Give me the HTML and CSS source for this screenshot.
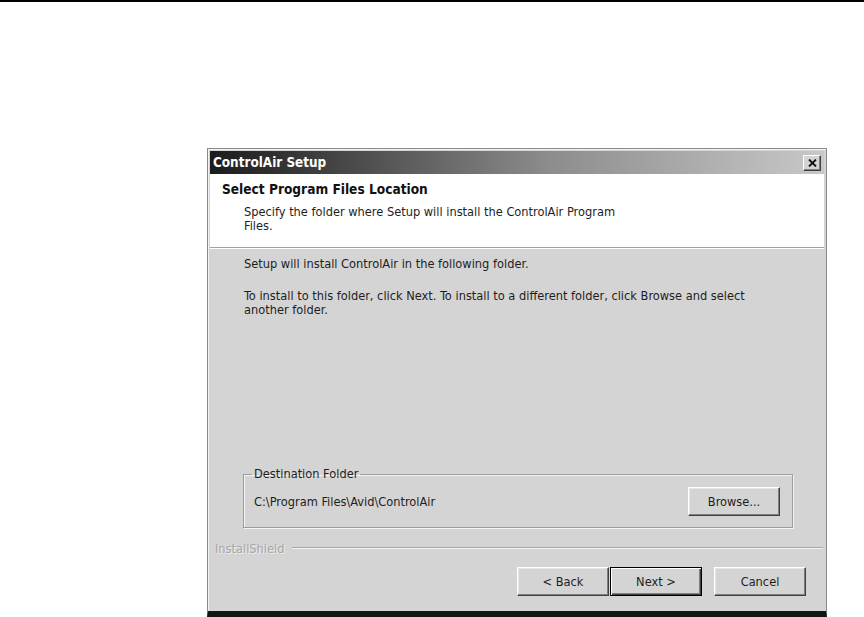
FILE: index.html
```html
<!DOCTYPE html>
<html lang="en">
<head>
  <meta charset="UTF-8">
  <meta name="viewport" content="width=device-width, initial-scale=1.0">
  <title>ControlAir Setup</title>
  <link rel="stylesheet" href="styles.css">
</head>
<body>
  <div class="rule"></div>
  <main class="page">
    <div class="dialog">
      <div class="titlebar">
        <span class="title">ControlAir Setup</span>
        <button class="close" aria-label="Close">
          <svg width="9" height="8" viewBox="0 0 9 8">
            <path d="M1 0.5 L8 7.5 M8 0.5 L1 7.5" stroke="#111" stroke-width="1.8" fill="none"/>
          </svg>
        </button>
      </div>
      <div class="header">
        <h1>Select Program Files Location</h1>
        <p>Specify the folder where Setup will install the ControlAir Program<br>Files.</p>
      </div>
      <div class="sep"></div>
      <div class="content">
        <p>Setup will install ControlAir in the following folder.</p>
        <p class="gap">To install to this folder, click Next. To install to a different folder, click Browse and select<br>another folder.</p>
        <fieldset class="dest">
          <legend>Destination Folder</legend>
          <span class="path">C:\Program Files\Avid\ControlAir</span>
          <button class="btn">Browse...</button>
        </fieldset>
        <div class="brand">
          <span>InstallShield</span>
          <div class="brand-line"></div>
        </div>
        <div class="actions">
          <button class="btn">&lt; Back</button>
          <button class="btn default">Next &gt;</button>
          <button class="btn cancel">Cancel</button>
        </div>
      </div>
    </div>
  </main>
</body>
</html>
```

FILE: styles.css
```css
body{
  margin: 0;
  background: #fff;
  font-family: "DejaVu Sans Condensed", "DejaVu Sans", sans-serif;
  font-stretch: condensed;
  font-size: 12.7px;
  color: #1e1e1e;
  overflow: hidden;
}
.rule{
  height: 2px;
  background: #000;
}
.page{
  padding: 146px 0 0 207px;
}
.dialog{
  width: 614px;
  padding: 2px 2px 0 2px;
  background: #d4d4d4;
  border: 1px solid #8a8a8a;
  border-bottom: 6px solid #151515;
  box-shadow: inset 1px 1px #f2f2f2;
}
.titlebar{
  height: 23px;
  display: flex;
  align-items: center;
  justify-content: space-between;
  padding: 0 3px 0 3px;
  background: linear-gradient(to right, #1c1c1c, #333 12%, #8c8c8c 55%, #c8c8c8);
}
.title{
  color: #fff;
  font-weight: bold;
  font-size: 13.4px;
}
.close{
  width: 18px;
  height: 16px;
  padding: 0;
  display: flex;
  align-items: center;
  justify-content: center;
  background: #d4d4d4;
  border: 1px solid;
  border-color: #fff #404040 #404040 #fff;
  box-shadow: inset -1px -1px #808080;
}
.header{
  background: #fff;
  height: 73px;
  padding: 7px 0 0 12px;
  box-sizing: border-box;
}
.header h1{
  margin: 0;
  font-size: 13.6px;
  line-height: 16px;
  font-weight: bold;
  color: #111;
}
.header p{
  margin: 8px 0 0 22px;
  line-height: 14px;
}
.sep{
  height: 1px;
  background: #a0a0a0;
  border-bottom: 1px solid #fff;
}
.content{
  padding: 8px 0 15px 0;
}
.content p{
  margin: 0 0 0 34px;
  line-height: 14px;
}
.content .gap{
  margin-top: 18px;
}
.dest{
  margin: 150px 31px 0 33px;
  padding: 6px 12px 11px 10px;
  border: 1px solid #9c9c9c;
  box-shadow: inset 1px 1px #f4f4f4, 1px 1px #f4f4f4;
  display: flex;
  align-items: center;
  justify-content: space-between;
}
.dest legend{
  padding: 0 2px;
  margin-left: -2px;
  line-height: 14px;
}
.btn{
  width: 92px;
  height: 29px;
  font-family: inherit;
  font-stretch: condensed;
  font-size: 12.7px;
  color: #1e1e1e;
  background: #d4d4d4;
  border: 1px solid;
  border-color: #fff #404040 #404040 #fff;
  box-shadow: inset -1px -1px #808080, inset 1px 1px #e6e6e6;
  padding: 0;
}
.brand{
  display: flex;
  align-items: center;
  margin: 13px 1px 0 5px;
  height: 14px;
  color: #a6a6a6;
  text-shadow: 1px 1px #f0f0f0;
}
.brand-line{
  flex: 1;
  margin-left: 8px;
  border-top: 1px solid #a4a4a4;
  border-bottom: 1px solid #f4f4f4;
}
.actions{
  display: flex;
  justify-content: flex-end;
  margin: 12px 18px 0 0;
  gap: 1px;
}
.default{
  border-color: #000;
  box-shadow: inset 1px 1px #fff, inset -1px -1px #404040, inset -2px -2px #808080;
}
.cancel{
  margin-left: 11px;
}
```
